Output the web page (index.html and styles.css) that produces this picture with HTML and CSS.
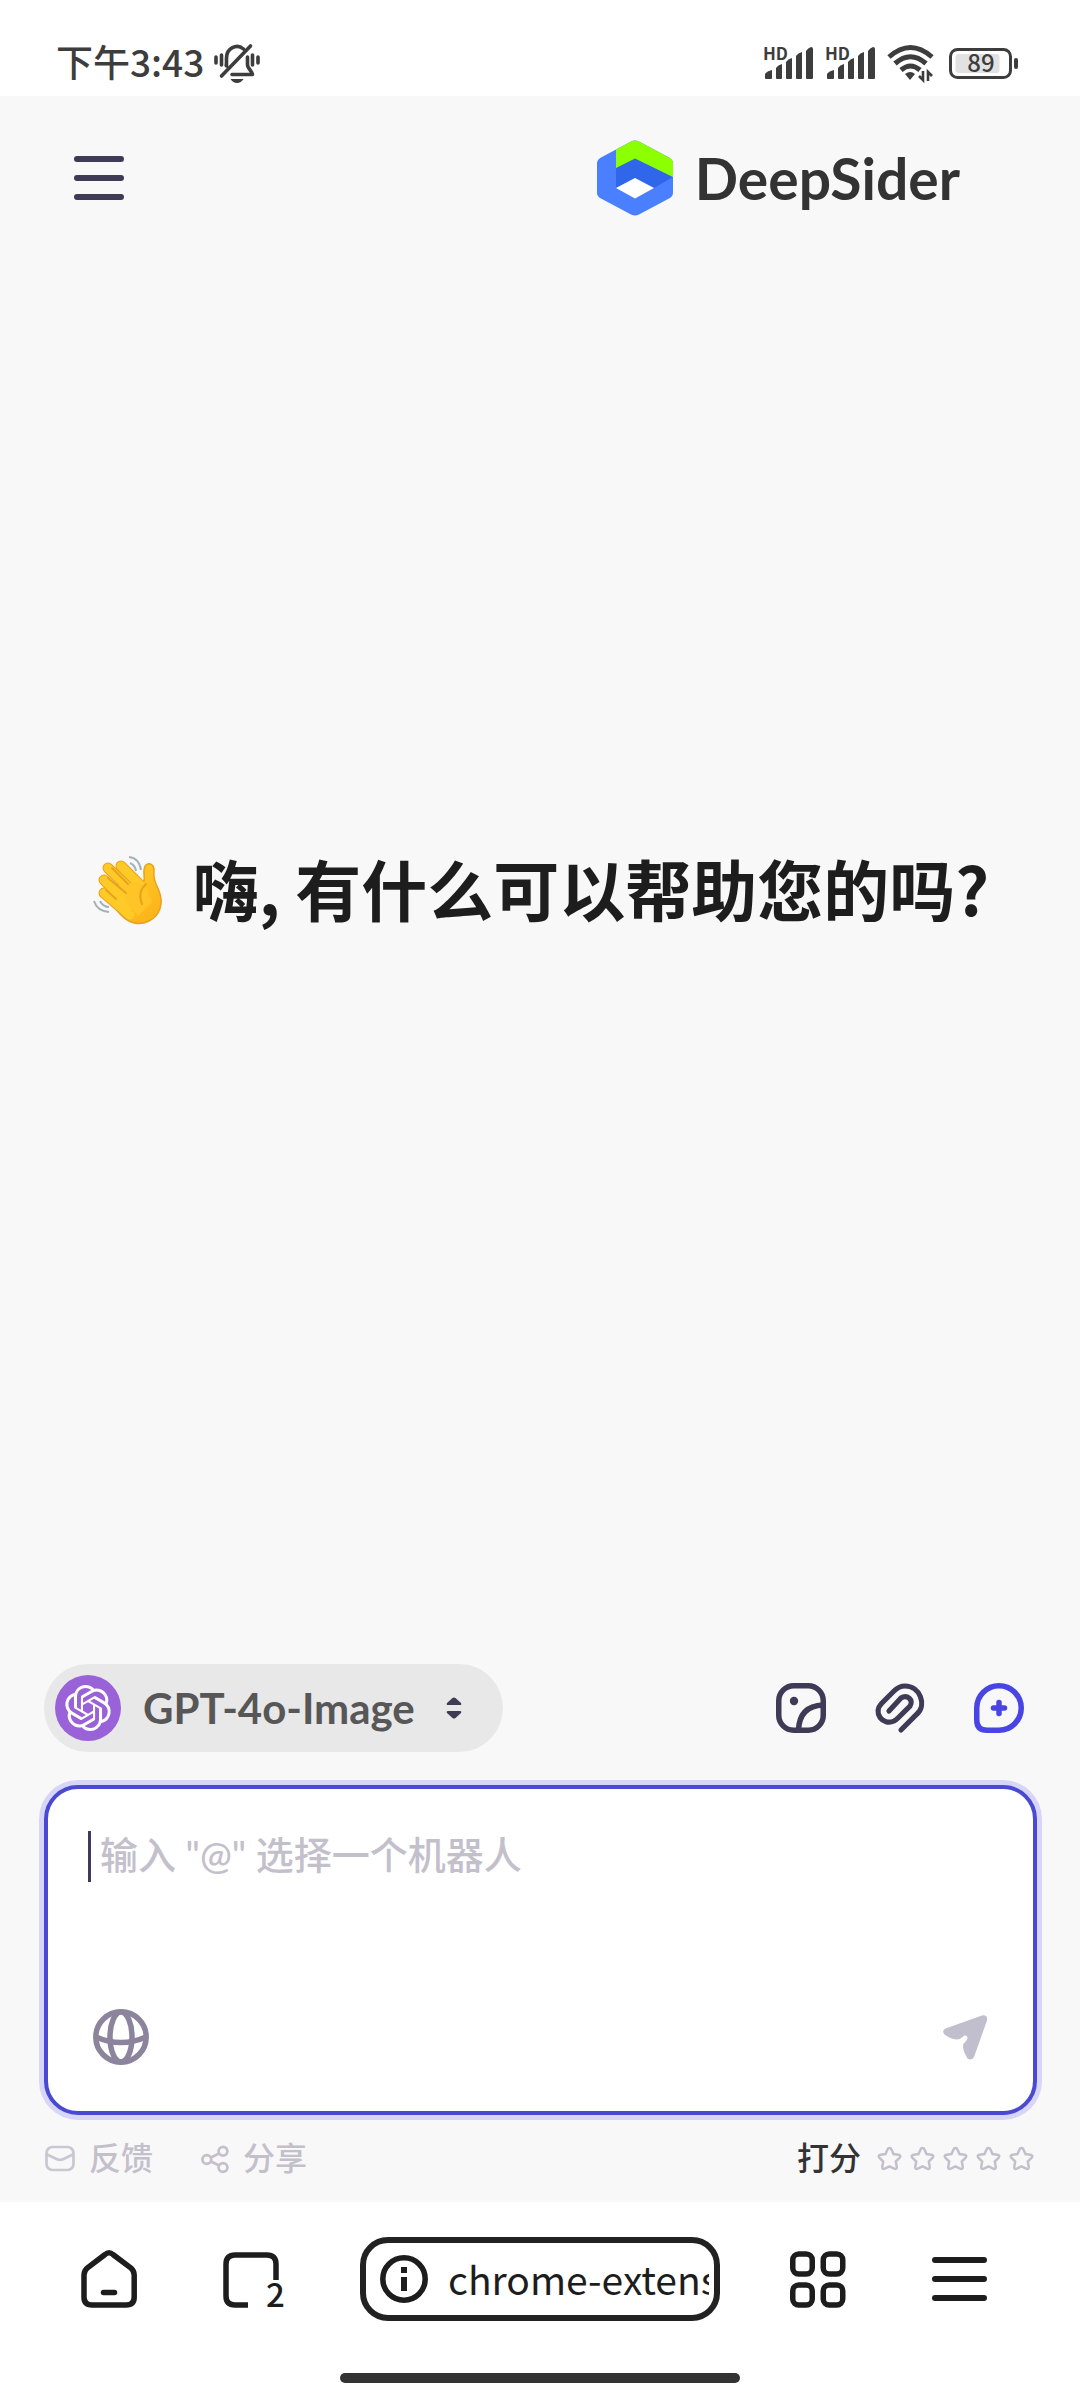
FILE: index.html
```html
<!DOCTYPE html>
<html lang="zh-CN">
<head>
<meta charset="utf-8">
<meta name="viewport" content="width=device-width, initial-scale=1">
<title>DeepSider</title>
<link rel="stylesheet" href="styles.css">
</head>
<body>
<div class="status">
  <div class="status-side">
    <span class="clock">下午3:43</span>
    <svg class="bell" viewBox="0 0 46 40" aria-hidden="true">
      <g fill="none" stroke="#3d3d3d" stroke-width="3.6" stroke-linecap="round">
        <path d="M2 14v6M7.500 12v10M44 14v6M38.500 12v10"/>
        <path d="M12.500 23v-8a10.500 11.500 0 0 1 17-9M36.500 3L7.500 33"/>
        <path d="M33.500 14v8c0 3 5 7 5 9.500H18" stroke-linejoin="round"/>
      </g>
      <path d="M12 15l2 6-2 3-1.500-1zM33 13l-1 8 3 6zM16.500 36h13q-2.500 4-6.500 4t-6.500-4z" fill="#3d3d3d"/>
    </svg>
  </div>
  <div class="status-side status-right">
    <svg class="signal" viewBox="0 0 52 34" aria-hidden="true"><use href="#sig"/><text x="0" y="14" class="hd">HD</text></svg>
    <svg class="signal" viewBox="0 0 52 34" aria-hidden="true"><use href="#sig"/><text x="0" y="14" class="hd">HD</text></svg>
    <svg class="wifi" viewBox="0 0 48 38" aria-hidden="true">
      <g fill="none" stroke="#3d3d3d" stroke-width="5">
        <path d="M2 13Q23.500-6 45 13"/><path d="M8 19.500Q23.500 6 39 19.500"/><path d="M14 26Q23.500 18 33 26"/>
      </g>
      <path d="M18 30q5.500-4 10 0l-5 6z" fill="#3d3d3d"/>
      <path d="M36 27v9l-4-4M41 37v-9l4 4" fill="none" stroke="#3d3d3d" stroke-width="2.600"/>
    </svg>
    <svg class="battery" viewBox="0 0 70 31" aria-hidden="true">
      <rect x="1.500" y="1.500" width="60" height="28" rx="7" fill="none" stroke="#3d3d3d" stroke-width="3"/>
      <rect x="6.500" y="6" width="44" height="19" rx="3" fill="#e2e2e2"/>
      <rect x="65" y="10" width="4" height="11" rx="2" fill="#3d3d3d"/>
      <text x="32" y="24" text-anchor="middle" class="pct">89</text>
    </svg>
  </div>
</div>

<svg class="defs" aria-hidden="true">
  <defs>
    <path id="sig" fill="#3d3d3d" d="M2 32v-4q2-3 7-4v8q0 1-1 1H3q-1 0-1-1zM13 32V22q2-3 6-4v14q0 1-1 1h-4q-1 0-1-1zM23 32V16q2-3 6-4v20q0 1-1 1h-4q-1 0-1-1zM33 32V10q2-3 6-4v26q0 1-1 1h-4q-1 0-1-1zM43 32V5q2-3 5-4 2 0 2 2v29q0 1-1 1h-5q-1 0-1-1z"/>
    <path id="star" d="M12.500 2q1.400 0 2 1.500L16.500 8l5 .8q3 .8 1 3L18.800 15.500l1 5.500q0 2.600-2.600 1.600L12.500 20.400 7.800 22.600Q5.200 23.600 5.200 21l1-5.500L2.500 11.800q-2-2.200 1-3l5-.8 2-4.500q.6-1.500 2-1.500z"/>
  </defs>
</svg>

<main class="app">
  <header class="top">
    <button class="icon-btn" aria-label="菜单">
      <svg width="50" height="46" viewBox="0 0 50 46"><path d="M3 4h44M3 23h44M3 42h44" stroke="#3f3a55" stroke-width="6" stroke-linecap="round"/></svg>
    </button>
    <div class="brand">
      <svg width="76" height="76" viewBox="0 0 76 76" aria-hidden="true">
        <path d="M34 1.500q4-2 8 0l30 16q4 2 4 6v29q0 4-4 6L42 74.500q-4 2-8 0L4 58.500q-4-2-4-6v-29q0-4 4-6z" fill="#4a80ff"/>
        <path d="M19 28L38 18l38 19-19 11-19-10-19 10z" fill="#2f66ea"/>
        <path d="M19 9.500L34 1.500q4-2 8 0l30 16q4 2 4 6V37L38 18.500 19 28z" fill="#8cff00"/>
        <path d="M38 38l19 10-19 10.500L19 48z" fill="#fff"/>
      </svg>
      <span class="brand-name">DeepSider</span>
    </div>
  </header>

  <section class="welcome">
    <svg class="wave" width="72" height="72" viewBox="0 0 72 72" aria-hidden="true">
      <defs><linearGradient id="skin" x1="0" y1="0" x2="0.500" y2="1"><stop offset="0" stop-color="#ffcf27"/><stop offset="1" stop-color="#fdb51c"/></linearGradient></defs>
      <g stroke="#e8a21c" stroke-width="11" stroke-linecap="round"><path d="M29 11L46 28M16 13L42 38M12 25L38 50M12 38L38 60"/></g>
      <path d="M24 30L52 26C53 19 50 14 54 10c4-3 8 0 8 5-1 9 2 14 5 21 5 12 1 25-10 30-10 5-20 2-27-5L14 44z" fill="url(#skin)" stroke="#e8a21c" stroke-width="1.500"/>
      <g stroke="#ffca28" stroke-width="9" stroke-linecap="round"><path d="M29 11L48 30M16 13L42 38M12 25L38 50M12 38L38 60"/></g>
      <path d="M36 50L30 30 46 27l8 6 6 14-14 14z" fill="#ffc526"/>
      <path d="M20 13L36 29M16 23L34 38M14 35L24 44M54 29q-9 8-4 20" fill="none" stroke="#e8a21c" stroke-width="2" stroke-linecap="round"/>
      <path d="M37 2q10 1 12 13M38 8q5 2 6 8M2 46q3 10 15 11M8 46q3 6 9 6" fill="none" stroke="#a5b1ba" stroke-width="2"/>
    </svg>
    <h1 class="hello">嗨, 有什么可以帮助您的吗?</h1>
  </section>

  <div class="tools">
    <button class="model">
      <span class="avatar"><svg width="46" height="46" viewBox="0 0 24 24" aria-hidden="true"><path fill="#fff" d="M22.2819 9.8211a5.9847 5.9847 0 0 0-.5157-4.9108 6.0462 6.0462 0 0 0-6.5098-2.9A6.0651 6.0651 0 0 0 4.9807 4.1818a5.9847 5.9847 0 0 0-3.9977 2.9 6.0462 6.0462 0 0 0 .7427 7.0966 5.98 5.98 0 0 0 .511 4.9107 6.051 6.051 0 0 0 6.5146 2.9001A5.9847 5.9847 0 0 0 13.2599 24a6.0557 6.0557 0 0 0 5.7718-4.2058 5.9894 5.9894 0 0 0 3.9977-2.9001 6.0557 6.0557 0 0 0-.7475-7.0729zm-9.022 12.6081a4.4755 4.4755 0 0 1-2.8764-1.0408l.1419-.0804 4.7783-2.7582a.7948.7948 0 0 0 .3927-.6813v-6.7369l2.02 1.1686a.071.071 0 0 1 .038.052v5.5826a4.504 4.504 0 0 1-4.4945 4.4944zm-9.6607-4.1254a4.4708 4.4708 0 0 1-.5346-3.0137l.142.0852 4.783 2.7582a.7712.7712 0 0 0 .7806 0l5.8428-3.3685v2.3324a.0804.0804 0 0 1-.0332.0615L9.74 19.9502a4.4992 4.4992 0 0 1-6.1408-1.6464zM2.3408 7.8956a4.485 4.485 0 0 1 2.3655-1.9728V11.6a.7664.7664 0 0 0 .3879.6765l5.8144 3.3543-2.0201 1.1685a.0757.0757 0 0 1-.071 0l-4.8303-2.7865A4.504 4.504 0 0 1 2.3408 7.872zm16.5963 3.8558L13.1038 8.364 15.1192 7.2a.0757.0757 0 0 1 .071 0l4.8303 2.7913a4.4944 4.4944 0 0 1-.6765 8.1042v-5.6772a.79.79 0 0 0-.407-.667zm2.0107-3.0231l-.142-.0852-4.7735-2.7818a.7759.7759 0 0 0-.7854 0L9.409 9.2297V6.8974a.0662.0662 0 0 1 .0284-.0615l4.8303-2.7866a4.4992 4.4992 0 0 1 6.6802 4.66zM8.3065 12.863l-2.02-1.1638a.0804.0804 0 0 1-.038-.0567V6.0742a4.4992 4.4992 0 0 1 7.3757-3.4537l-.142.0805L8.704 5.459a.7948.7948 0 0 0-.3927.6813zm1.0976-2.3654l2.602-1.4998 2.6069 1.4998v2.9994l-2.5974 1.4997-2.6067-1.4997Z"/></svg></span>
      <span class="model-name">GPT-4o-Image</span>
      <svg width="18" height="24" viewBox="0 0 18 24" aria-hidden="true"><path d="M2 7l5.500-5q1.500-1.200 3 0L16 7q1 2-1 2H3Q1 9 2 7zM2 17l5.500 5q1.500 1.200 3 0L16 17q1-2-1-2H3q-2 0-1 2z" fill="#3f3a55"/></svg>
    </button>
    <div class="actions">
      <button class="icon-btn" aria-label="图片">
        <svg width="50" height="50" viewBox="0 0 50 50" fill="none" stroke="#3f3a55" stroke-width="5.500"><rect x="2.750" y="2.750" width="44.500" height="44.500" rx="15"/><path d="M22.500 47q1-24 24.500-25"/><circle cx="18" cy="18" r="4.200" fill="#3f3a55" stroke="none"/></svg>
      </button>
      <button class="icon-btn" aria-label="附件">
        <svg width="50" height="50" viewBox="0 0 50 50" fill="none" stroke="#3f3a55" stroke-width="5.200" stroke-linecap="round"><path d="M26 47L42 31c10-9 3-28-12-28-5 0-8 2-11 5L7 20C-3 30 8 43 19 38q2-1 4-3L35 23c4-6-3-12-9-8L14 28"/></svg>
      </button>
      <button class="icon-btn" aria-label="新对话">
        <svg width="50" height="50" viewBox="0 0 50 50" fill="none" stroke="#4845e4" stroke-width="5.500" stroke-linecap="round"><path d="M25 2.750a22.250 22.250 0 0 1 0 44.500H13q-10.250 0-10.250-10.250V25A22.250 22.250 0 0 1 25 2.750z"/><path d="M25 19.500v11M19.500 25h11"/></svg>
      </button>
    </div>
  </div>

  <form class="composer">
    <textarea class="prompt" aria-label="输入" placeholder='输入 "@" 选择一个机器人'></textarea>
    <div class="composer-row">
      <button type="button" class="icon-btn" aria-label="联网">
        <svg width="56" height="56" viewBox="0 0 56 56" fill="none" stroke="#8b849c" stroke-width="5.500"><circle cx="28" cy="28" r="25.200"/><ellipse cx="28" cy="28" rx="11" ry="25"/><path d="M3 28q25 11 50 0"/></svg>
      </button>
      <button type="button" class="icon-btn" aria-label="发送">
        <svg width="45" height="45" viewBox="0 0 45 45"><path d="M2.500 13.500L39 .5q6-1 5 5L31 42q-2 4-6.500 1.500Q20 36 20 31.500q0-3 2.500-5 3-3 1.500-5-2-2-4.500.5-2.500 2.500-6 2.500Q8 24 2 20q-4-4 .5-6.500z" fill="#c1becd"/></svg>
      </button>
    </div>
  </form>

  <footer class="meta">
    <a class="meta-link" href="#feedback">
      <svg width="30" height="30" viewBox="0 0 30 30" fill="none" stroke="#c9c7d2" stroke-width="2.700" aria-hidden="true"><rect x="1.500" y="3" width="27" height="23" rx="6"/><path d="M2 10.500l9.500 4.500q3.500 1.600 7 0l9.500-4.500"/></svg>
      <span class="meta-text">反馈</span></a>
    <a class="meta-link" href="#share">
      <svg width="28" height="28" viewBox="0 0 28 28" fill="none" stroke="#c3c0cc" stroke-width="2.700" aria-hidden="true"><circle cx="5.800" cy="14.500" r="4.400"/><circle cx="22" cy="6.200" r="4.400"/><circle cx="22" cy="22.500" r="4.400"/><path d="M10 12.500l8-4M10 16.500l8 4"/></svg>
      <span class="meta-text">分享</span></a>
    <div class="rate">
      <span class="meta-text rate-label">打分</span>
      <button class="star" aria-label="1 星"><svg width="25" height="25"><use href="#star"/></svg></button>
      <button class="star" aria-label="2 星"><svg width="25" height="25"><use href="#star"/></svg></button>
      <button class="star" aria-label="3 星"><svg width="25" height="25"><use href="#star"/></svg></button>
      <button class="star" aria-label="4 星"><svg width="25" height="25"><use href="#star"/></svg></button>
      <button class="star" aria-label="5 星"><svg width="25" height="25"><use href="#star"/></svg></button>
    </div>
  </footer>
</main>

<nav class="browser">
  <div class="browser-row">
    <button class="icon-btn" aria-label="主页">
      <svg width="56" height="58" viewBox="0 0 56 58" fill="none" stroke="#1d1d1d" stroke-width="5.500" stroke-linecap="round"><path d="M24 4.500q4-3.500 8 0L50 18q3.200 3 3.200 7v22q0 8-8 8H11q-8 0-8-8V25q0-4 3.200-7z"/><path d="M22.500 42.500h11"/></svg>
    </button>
    <button class="icon-btn tabs" aria-label="标签页">
      <svg width="62" height="58" viewBox="0 0 62 58" aria-hidden="true"><path d="M53 30V14q0-9-9-9H12q-9 0-9 9v32q0 9 9 9h13" fill="none" stroke="#1d1d1d" stroke-width="5.500"/><text x="43" y="57" class="tab-count">2</text></svg>
    </button>
    <button class="address">
      <svg width="48" height="48" viewBox="0 0 48 48" aria-hidden="true"><circle cx="24" cy="24" r="21.200" fill="none" stroke="#1d1d1d" stroke-width="5.500"/><path d="M21 12h6v6h-6zM21 22h6v14h-6z" fill="#1d1d1d"/></svg>
      <span class="url">chrome-extension</span>
    </button>
    <button class="icon-btn" aria-label="功能">
      <svg width="56" height="58" viewBox="0 0 56 58" fill="none" stroke="#1d1d1d" stroke-width="5.500"><rect x="2.750" y="4" width="19.500" height="20" rx="6"/><rect x="33.250" y="4" width="19.500" height="20" rx="6"/><rect x="2.750" y="35" width="19.500" height="20" rx="6"/><rect x="33.250" y="35" width="19.500" height="20" rx="6"/></svg>
    </button>
    <button class="icon-btn" aria-label="更多">
      <svg width="55" height="46" viewBox="0 0 55 46"><path d="M3 4h49M3 23h49M3 42h49" stroke="#1d1d1d" stroke-width="6" stroke-linecap="round"/></svg>
    </button>
  </div>
  <div class="home-bar"></div>
</nav>
</body>
</html>
```
FILE: styles.css
```css
* { box-sizing: border-box; }

body {
  margin: 0;
  min-height: 100vh;
  display: flex;
  flex-direction: column;
  background: #fff;
  color: #1d1d1d;
  font-family: "Noto Sans CJK SC", sans-serif;
}

button {
  border: 0;
  padding: 0;
  background: none;
  color: inherit;
  font: inherit;
  cursor: pointer;
}

svg { display: block; flex: none; overflow: visible; }
.defs { position: absolute; width: 0; height: 0; }
.icon-btn { display: flex; flex: none; }

/* Phone status bar */
.status {
  display: flex;
  justify-content: space-between;
  align-items: center;
  height: 96px;
  padding: 30px 61px 0 56px;
}
.status-side { display: flex; align-items: center; gap: 10px; }
.clock { padding-bottom: 4px; font-size: 37px; line-height: 40px; color: #3d3d3d; font-weight: 500; }
.bell { width: 46px; height: 40px; }
.signal { width: 52px; height: 34px; }
.wifi { width: 48px; height: 38px; }
.battery { width: 70px; height: 31px; margin-left: 4px; }
.hd { font: 700 17px "Noto Sans CJK SC", sans-serif; fill: #3d3d3d; }
.pct { font: 500 24px "Noto Sans CJK SC", sans-serif; fill: #3d3d3d; }

/* Chat panel */
.app {
  flex: 1;
  display: flex;
  flex-direction: column;
  padding: 0 43px 0 44px;
  background: #f8f8f8;
}
.top {
  display: flex;
  justify-content: space-between;
  align-items: center;
  padding: 44px 77px 0 30px;
}
.brand { display: flex; align-items: center; gap: 22px; }
.brand-name {
  font-family: Lato, sans-serif;
  font-size: 57px;
  line-height: 76px;
  font-weight: 700;
  color: #333;
}

.welcome {
  flex: 1;
  display: flex;
  justify-content: center;
  align-items: center;
  gap: 29px;
  padding-bottom: 98px;
}
.hello { margin: 0; padding-bottom: 8px; font-size: 66px; line-height: 96px; font-weight: 700; white-space: nowrap; }

.tools {
  display: flex;
  justify-content: space-between;
  align-items: center;
  padding-right: 13px;
}
.model {
  display: flex;
  align-items: center;
  height: 88px;
  padding: 0 40px 0 11px;
  border-radius: 44px;
  background: #e8e8e8;
}
.avatar {
  display: flex;
  justify-content: center;
  align-items: center;
  width: 66px;
  height: 66px;
  border-radius: 50%;
  background: #9a62d9;
}
.model-name {
  margin: 0 30px 0 22px;
  font-family: Lato, sans-serif;
  font-size: 42px;
  font-weight: 700;
  color: #575757;
}
.actions { display: flex; gap: 49px; }

.composer {
  display: flex;
  flex-direction: column;
  justify-content: space-between;
  height: 330px;
  margin-top: 33px;
  padding: 42px 45px 46px 40px;
  border: 4px solid #4a49d4;
  border-radius: 34px;
  background: #fff;
  box-shadow: 0 0 0 5px #d7d5f8;
}
.prompt {
  height: 51px;
  padding: 0 0 0 9px;
  border: 0;
  border-left: 3px solid #3f3a55;
  outline: 0;
  resize: none;
  overflow: hidden;
  background: none;
  font: 500 38px/46px Lato, "Noto Sans CJK SC", sans-serif;
}
.prompt::placeholder { color: #c3c0cc; }
.composer-row { display: flex; justify-content: space-between; align-items: center; padding-left: 5px; }

.meta {
  display: flex;
  align-items: center;
  gap: 48px;
  height: 87px;
  padding: 0 3px 0 1px;
  font-size: 32px;
  line-height: 40px;
  font-weight: 500;
}
.meta-link { display: flex; align-items: center; gap: 14px; color: #c3c0cc; text-decoration: none; }
.meta-text { padding-bottom: 5px; }
.rate { display: flex; align-items: center; gap: 8px; margin-left: auto; }
.rate-label { margin-right: 8px; color: #333; }
.star svg { fill: none; stroke: #c3c0cc; stroke-width: 2.5; }

/* Browser toolbar */
.browser { display: flex; flex-direction: column; align-items: center; padding-bottom: 17px; }
.browser-row { display: flex; align-items: center; align-self: stretch; padding: 35px 93px 52px 81px; }
.tabs { margin-left: 86px; }
.address {
  flex: 1;
  min-width: 0;
  display: flex;
  align-items: center;
  gap: 20px;
  height: 84px;
  margin: 0 70px 0 75px;
  padding: 0 5px 0 14px;
  border: 6px solid #222;
  border-radius: 28px;
}
.address + .icon-btn { margin-right: 86px; }
.url { padding-bottom: 3px; overflow: hidden; white-space: nowrap; font-size: 39px; line-height: 56px; }
.tab-count { font: 500 33px "Noto Sans CJK SC", sans-serif; fill: #1d1d1d; }
.home-bar { width: 400px; max-width: 60%; height: 10px; border-radius: 5px; background: #333; }
```
